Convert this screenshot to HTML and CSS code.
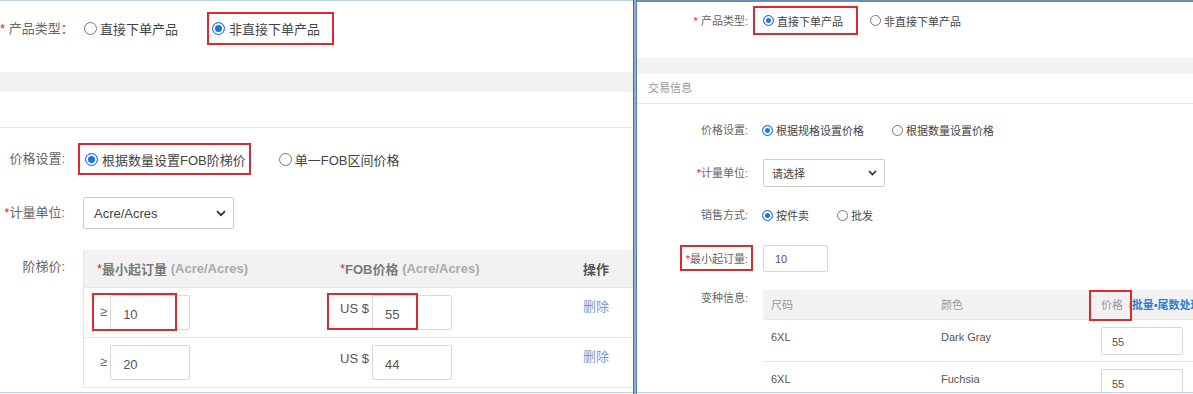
FILE: index.html
```html
<!DOCTYPE html>
<html lang="zh-CN">
<head>
  <meta charset="UTF-8" />
  <title>产品类型与价格设置</title>
  <meta name="viewport" content="width=device-width, initial-scale=1.0" />
  <link rel="stylesheet" href="styles.css">
</head>
<body>
  <div class="screen">

    <!-- 非直接下单产品 -->
    <section class="pane left">
      <div class="row l-type">
        <span class="lbl lbl-type"><i class="req">*</i> 产品类型：</span>
        <label class="opt opt-first"><span class="radio"></span>直接下单产品</label>
        <label class="opt hl hl-type"><span class="radio on"></span>非直接下单产品</label>
      </div>
      <div class="band"></div>
      <div class="l-blank"></div>

      <div class="row l-price">
        <span class="lbl">价格设置:</span>
        <label class="opt hl hl-price"><span class="radio on"></span>根据数量设置FOB阶梯价</label>
        <label class="opt opt-gap"><span class="radio"></span>单一FOB区间价格</label>
      </div>

      <div class="row l-unit">
        <span class="lbl"><i class="req">*</i>计量单位:</span>
        <div class="select">
          <span>Acre/Acres</span>
          <svg width="10" height="7" viewBox="0 0 10 7"><path d="M1 1.2 L5 5.2 L9 1.2" fill="none" stroke="#333" stroke-width="1.8"/></svg>
        </div>
      </div>

      <div class="row l-tier">
        <span class="lbl lbl-top">阶梯价:</span>
        <div class="tier">
          <div class="tr th">
            <div class="tc c1"><i class="req">*</i><b>最小起订量</b>&nbsp;<em>(Acre/Acres)</em></div>
            <div class="tc c2"><i class="req">*</i><b>FOB价格</b>&nbsp;<em>(Acre/Acres)</em></div>
            <div class="tc c3"><b class="dark">操作</b></div>
          </div>
          <div class="tr">
            <div class="tc c1"><span class="ge">≥</span><input class="inp" value="10"><span class="mark mark-qty"></span></div>
            <div class="tc c2"><span class="cur">US $</span><input class="inp" value="55"><span class="mark mark-fob"></span></div>
            <div class="tc c3"><a class="del">删除</a></div>
          </div>
          <div class="tr">
            <div class="tc c1"><span class="ge">≥</span><input class="inp" value="20"></div>
            <div class="tc c2"><span class="cur">US $</span><input class="inp" value="44"></div>
            <div class="tc c3"><a class="del">删除</a></div>
          </div>
        </div>
      </div>
    </section>

    <div class="divider"></div>

    <!-- 直接下单产品 -->
    <section class="pane right">
      <div class="row r-type">
        <span class="lbl"><i class="req">*</i> 产品类型:</span>
        <label class="opt hl hl-rtype"><span class="radio on"></span>直接下单产品</label>
        <label class="opt opt-near"><span class="radio"></span>非直接下单产品</label>
      </div>
      <div class="band"></div>
      <div class="sec-title">交易信息</div>

      <div class="row r-price">
        <span class="lbl">价格设置:</span>
        <label class="opt"><span class="radio on"></span>根据规格设置价格</label>
        <label class="opt opt-gap"><span class="radio"></span>根据数量设置价格</label>
      </div>

      <div class="row r-unit">
        <span class="lbl"><i class="req">*</i>计量单位:</span>
        <div class="select">
          <span>请选择</span>
          <svg width="9" height="6" viewBox="0 0 9 6"><path d="M1 1 L4.5 4.5 L8 1" fill="none" stroke="#333" stroke-width="1.7"/></svg>
        </div>
      </div>

      <div class="row r-sale">
        <span class="lbl">销售方式:</span>
        <label class="opt"><span class="radio on"></span>按件卖</label>
        <label class="opt opt-gap"><span class="radio"></span>批发</label>
      </div>

      <div class="row r-moq">
        <span class="lbl"><span class="moq-text"><i class="req">*</i>最小起订量:<span class="mark mark-moq"></span></span></span>
        <input class="inp" value="10">
      </div>

      <div class="row r-var">
        <span class="lbl lbl-top">变种信息:</span>
        <div class="vtable">
          <div class="vr vh">
            <div class="vc v1">尺码</div>
            <div class="vc v2">颜色</div>
            <div class="vc v3">价格 <span class="paren">(</span><a class="bulk">批量•尾数处理</a><span class="mark mark-price"></span></div>
          </div>
          <div class="vr">
            <div class="vc v1">6XL</div>
            <div class="vc v2">Dark Gray</div>
            <div class="vc v3"><input class="inp" value="55"></div>
          </div>
          <div class="vr">
            <div class="vc v1">6XL</div>
            <div class="vc v2">Fuchsia</div>
            <div class="vc v3"><input class="inp" value="55"></div>
          </div>
        </div>
      </div>
    </section>

  </div>
</body>
</html>
```

FILE: styles.css
```css
body {
  margin: 0;
  background: #fff;
  color: #444;
  font-family: "Liberation Sans", "Noto Sans CJK SC", sans-serif;
}

.screen {
  display: flex;
  height: 394px;
  overflow: hidden;
}

.pane {
  height: 393px;
  box-sizing: border-box;
  overflow: hidden;
  border-bottom: 1px solid #c3d4e6;
}

.left {
  width: 633px;
  flex: none;
  border-top: 1px solid #b8cfe7;
  font-size: 13px;
}

.right {
  flex: 1;
  border-top: 2px solid #6f8fb2;
  font-size: 11px;
}

.divider {
  width: 2px;
  flex: none;
  background: #8eb0d4;
  border-left: 1px solid #4f6a88;
  border-right: 1px solid #5a7da2;
}

.row {
  display: flex;
  align-items: center;
}

.req {
  color: #e0282e;
  font-style: normal;
}

.lbl {
  flex: none;
  box-sizing: border-box;
  text-align: right;
  color: #666;
  white-space: nowrap;
}

.opt {
  display: flex;
  align-items: center;
  color: #444;
  white-space: nowrap;
  box-sizing: border-box;
}

.radio {
  flex: none;
  border: 1px solid #767676;
  border-radius: 50%;
  box-sizing: border-box;
  background: #fff;
}

.radio.on {
  border-color: #1a73e8;
  background: #1a73e8;
  box-shadow: inset 0 0 0 2px #fff;
}

.hl {
  border: 2px solid #e0282e;
}

.mark {
  position: absolute;
  border: 2px solid #e0282e;
  box-sizing: border-box;
  pointer-events: none;
}

.select {
  display: flex;
  align-items: center;
  justify-content: space-between;
  box-sizing: border-box;
  border: 1px solid #ccc;
  border-radius: 2px;
  background: #fff;
  color: #444;
}

.inp {
  box-sizing: border-box;
  border: 1px solid #d9d9d9;
  border-radius: 2px;
  font-family: inherit;
  color: #555;
  outline: none;
  margin: 0;
}

.band { background: #f1f1f1; }

/* left pane */
.left .lbl { width: 83px; padding-right: 18px; line-height: 18px; }
.left .lbl-type { padding-right: 11px; }
.left .radio { width: 13px; height: 13px; margin-right: 3px; }
.left .hl .radio { margin-right: 4px; }

.l-type { padding-top: 11px; height: 33px; }
.opt-first { margin-left: 1px; }
.hl-type { height: 33px; margin-left: 29px; padding: 0 12px 0 3px; }

.left .band { margin-top: 27px; height: 20px; }
.l-blank { height: 35px; border-bottom: 1px solid #e8e8e8; }

.l-price { margin-top: 15px; height: 32px; }
.hl-price { height: 32px; margin-left: -5px; padding: 0 3px 0 5px; }
.left .opt-gap { margin-left: 28px; }

.l-unit { margin-top: 22px; }
.left .select { width: 151px; height: 32px; padding: 0 7px 0 10px; font-size: 13px; }

.l-tier { margin-top: 21px; align-items: flex-start; }
.left .lbl-top { padding-top: 8px; }

.tier {
  flex: none;
  width: 600px;
  border-left: 1px solid #e6e6e6;
}

.tr {
  display: flex;
  height: 50px;
  box-sizing: border-box;
  border-bottom: 1px solid #e8e8e8;
}

.th {
  height: 38px;
  background: #f2f2f2;
  align-items: center;
}

.tc {
  position: relative;
  display: flex;
  align-items: flex-start;
  box-sizing: border-box;
  padding-left: 13px;
  padding-top: 7px;
  white-space: nowrap;
}

.th .tc { padding-top: 0; align-items: center; }
.th b { color: #7a7a7a; }
.th em { font-style: normal; font-weight: bold; color: #aaa; }
.th b.dark { color: #555; }

.c1 { width: 243px; }
.c2 { width: 243px; }
.c3 { flex: 1; }

.ge { margin: 9px 3px 0 3px; color: #666; font-size: 13px; line-height: 16px; }
.cur { margin-top: 6px; margin-right: 3px; color: #555; line-height: 16px; }
.left .inp { width: 80px; height: 35px; padding: 3px 12px 0; font-size: 13px; }

.del { color: #6a9fd6; margin-top: 4px; line-height: 16px; cursor: pointer; }

.mark-qty { left: 8px; top: 5px; width: 85px; height: 38px; }
.mark-fob { left: 0; top: 5px; width: 91px; height: 37px; }

/* right pane */
.right .lbl { width: 111px; margin-right: 14px; line-height: 16px; }
.right .radio { width: 11px; height: 11px; margin-right: 3px; }

.r-type { margin-top: 4px; height: 29px; }
.hl-rtype { height: 29px; margin-left: -9px; padding: 0 13px 0 8px; }
.opt-near { margin-left: 12px; }

.right .band { margin-top: 23px; height: 16px; background: #f2f2f2; }

.sec-title {
  height: 29px;
  line-height: 29px;
  padding-left: 11px;
  color: #999;
  border-bottom: 1px solid #e8e8e8;
}

.r-price { margin-top: 16px; height: 20px; }
.right .opt-gap { margin-left: 28px; }

.r-unit { margin-top: 19px; }
.right .select { width: 122px; height: 28px; margin-left: 1px; padding: 0 7px 0 8px; font-size: 11px; }

.r-sale { margin-top: 18px; height: 20px; }

.r-moq { margin-top: 20px; }
.moq-text { position: relative; }
.mark-moq { top: -8px; right: -5px; bottom: -6px; left: -6px; }
.r-moq .inp { width: 65px; height: 27px; margin-left: 1px; padding: 0 11px; font-size: 11px; }

.r-var { margin-top: 18px; align-items: flex-start; }

.vtable {
  flex: none;
  width: 470px;
  margin-left: 1px;
}

.vr {
  display: flex;
  height: 42px;
  box-sizing: border-box;
  border-bottom: 1px solid #e8e8e8;
  color: #555;
}

.vh {
  height: 30px;
  background: #f2f2f2;
  color: #999;
  align-items: center;
}

.vc {
  position: relative;
  box-sizing: border-box;
  padding-left: 8px;
  white-space: nowrap;
  line-height: 14px;
}

.vr:not(.vh) .vc { padding-top: 10px; }
.vr:not(.vh) .v3 { padding-top: 7px; }

.v1 { width: 170px; }
.v2 { width: 160px; }
.v3 { flex: 1; }

.paren { color: #bbb; margin-left: 2px; }
.bulk { color: #2c7fd4; font-weight: bold; }

.v3 .inp { width: 82px; height: 28px; padding: 2px 10px 0; font-size: 11px; }

.mark-price { left: -4px; top: -8px; width: 43px; height: 31px; }
```
